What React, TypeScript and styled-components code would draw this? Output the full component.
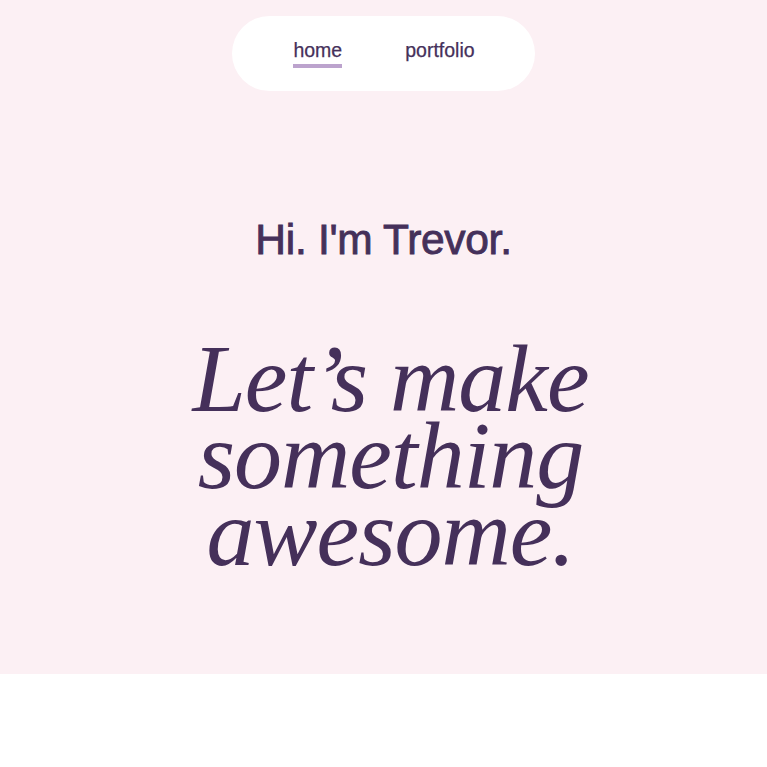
import React from "react";
import styled, { createGlobalStyle } from "styled-components";

const GlobalStyle = createGlobalStyle`
  html, body {
    margin: 0;
    padding: 0;
    background: #ffffff;
  }
  body {
    font-family: "Liberation Sans", Arial, sans-serif;
  }
`;

const Hero = styled.section`
  background: #fcf0f4;
  padding: 16px 0 103px;
  display: flex;
  flex-direction: column;
  align-items: center;
  color: #45305a;
`;

const NavPill = styled.nav`
  display: flex;
  align-items: center;
  gap: 63px;
  height: 75px;
  box-sizing: border-box;
  padding: 0 60px 0 61px;
  background: #ffffff;
  border-radius: 38px;
`;

const NavItem = styled.a<{ $active?: boolean }>`
  display: flex;
  flex-direction: column;
  gap: 2px;
  font-family: "Liberation Sans", Arial, sans-serif;
  font-size: 19.5px;
  line-height: 23px;
  color: #45305a;
  -webkit-text-stroke: 0.25px #45305a;
  text-decoration: none;
  cursor: pointer;

  &::after {
    content: "";
    display: block;
    height: 4px;
    background: ${(p) => (p.$active ? "#bca3cd" : "transparent")};
  }
`;

const Greeting = styled.h2`
  margin: 127px 0 0;
  font-family: "Liberation Sans", Arial, sans-serif;
  font-weight: 400;
  font-size: 42.5px;
  line-height: 43px;
  letter-spacing: -0.3px;
  color: #45305a;
  -webkit-text-stroke: 0.9px #45305a;
`;

const Headline = styled.h1`
  margin: 79px 0 0;
  padding-left: 14px;
  font-family: "Liberation Serif", "Times New Roman", serif;
  font-style: italic;
  font-weight: 400;
  font-size: 96px;
  line-height: 77px;
  letter-spacing: -1px;
  text-align: center;
  color: #45305a;
`;

const Line = styled.span`
  display: block;
`;

export default function App() {
  return (
    <>
      <GlobalStyle />
      <Hero>
        <NavPill>
          <NavItem $active>home</NavItem>
          <NavItem>portfolio</NavItem>
        </NavPill>
        <Greeting>Hi. I'm Trevor.</Greeting>
        <Headline>
          <Line>Let’s make</Line>
          <Line>something</Line>
          <Line>awesome.</Line>
        </Headline>
      </Hero>
    </>
  );
}
